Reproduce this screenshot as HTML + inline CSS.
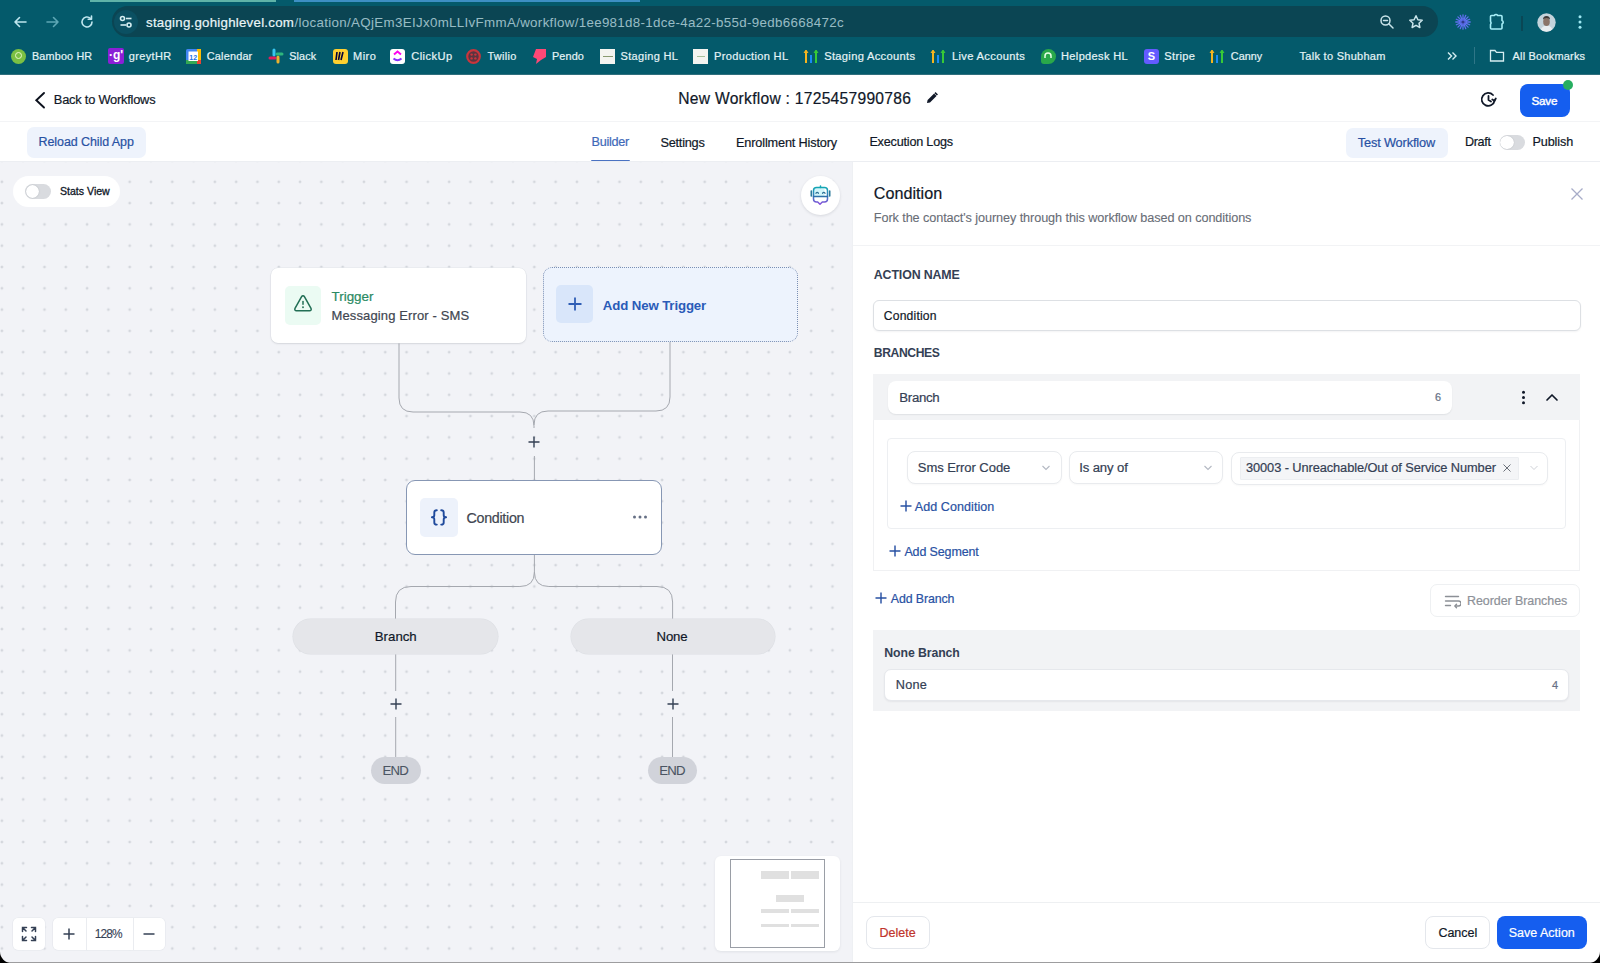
<!DOCTYPE html>
<html><head><meta charset="utf-8"><style>
html,body{margin:0;padding:0;width:1600px;height:963px;overflow:hidden;background:#fff;position:relative;font-family:"Liberation Sans",sans-serif}
.t{position:absolute;white-space:nowrap;line-height:normal}
svg{display:block}
</style></head><body>
<div style="position:absolute;left:0;top:0;width:1600px;height:75px;background:#045a6b"></div>
<div style="position:absolute;left:0;top:74px;width:1600px;height:1px;background:#2f6f7d"></div>
<div style="position:absolute;left:90px;top:0;width:186px;height:2px;background:#5fb3a8"></div>
<div style="position:absolute;left:294px;top:0;width:346px;height:2px;background:#3d8fc4"></div>
<div style="position:absolute;left:112px;top:6px;width:1326px;height:31px;border-radius:16px;background:#0b4553"></div>
<div style="position:absolute;left:114px;top:10px;width:24px;height:24px;border-radius:12px;background:#0b5062"></div>
<svg style="position:absolute;left:118px;top:14px" width="16" height="16" viewBox="0 0 16 16" fill="none" stroke="#d6eef2" stroke-width="1.6">
<circle cx="4.5" cy="4.5" r="2"/><line x1="8" y1="4.5" x2="13.5" y2="4.5"/><circle cx="11" cy="11" r="2"/><line x1="2.5" y1="11" x2="8" y2="11"/></svg>
<svg style="position:absolute;left:12px;top:14px" width="16" height="16" viewBox="0 0 16 16" fill="none" stroke="#bfe6ee" stroke-width="1.6" stroke-linecap="round" stroke-linejoin="round">
<path d="M14 8H3M7.5 3.5L3 8l4.5 4.5"/></svg>
<svg style="position:absolute;left:45px;top:14px" width="16" height="16" viewBox="0 0 16 16" fill="none" stroke="#5ea7b5" stroke-width="1.6" stroke-linecap="round" stroke-linejoin="round">
<path d="M2 8h11M8.5 3.5L13 8l-4.5 4.5"/></svg>
<svg style="position:absolute;left:79px;top:14px" width="16" height="16" viewBox="0 0 16 16" fill="none" stroke="#bfe6ee" stroke-width="1.6" stroke-linecap="round" stroke-linejoin="round">
<path d="M13 8a5 5 0 1 1-1.6-3.7"/><path d="M12.5 2v3.3H9.2"/></svg>
<div class="t" style="left:146.00px;top:15.04px;font-size:13.27px;letter-spacing:0.250px;color:#eaf6f8;font-weight:400;-webkit-text-stroke:0.2px #eaf6f8;">staging.gohighlevel.com</div>
<div class="t" style="left:294.50px;top:14.98px;font-size:13.34px;letter-spacing:0.327px;color:#98bcc4;font-weight:400;-webkit-text-stroke:0.05px #98bcc4;">/location/AQjEm3EIJx0mLLIvFmmA/workflow/1ee981d8-1dce-4a22-b55d-9edb6668472c</div>
<svg style="position:absolute;left:1379px;top:14px" width="16" height="16" viewBox="0 0 16 16" fill="none" stroke="#c9e4ea" stroke-width="1.5" stroke-linecap="round">
<circle cx="6.5" cy="6.5" r="4.5"/><line x1="4.5" y1="6.5" x2="8.5" y2="6.5"/><line x1="10" y1="10" x2="14" y2="14"/></svg>
<svg style="position:absolute;left:1408px;top:14px" width="16" height="16" viewBox="0 0 16 16" fill="none" stroke="#c9e4ea" stroke-width="1.5" stroke-linejoin="round">
<path d="M8 1.8l1.9 4 4.3.5-3.2 2.9.9 4.3L8 11.3l-3.9 2.2.9-4.3L1.8 6.3l4.3-.5z"/></svg>
<svg style="position:absolute;left:1454px;top:13px" width="18" height="18" viewBox="0 0 18 18" stroke="#6070f0" stroke-width="1.3" stroke-linecap="round">
<path d="M12.00 9.00L16.20 9.00M11.77 10.15L15.65 11.76M11.12 11.12L14.09 14.09M10.15 11.77L11.76 15.65M9.00 12.00L9.00 16.20M7.85 11.77L6.24 15.65M6.88 11.12L3.91 14.09M6.23 10.15L2.35 11.76M6.00 9.00L1.80 9.00M6.23 7.85L2.35 6.24M6.88 6.88L3.91 3.91M7.85 6.23L6.24 2.35M9.00 6.00L9.00 1.80M10.15 6.23L11.76 2.35M11.12 6.88L14.09 3.91M11.77 7.85L15.65 6.24"/><circle cx="9" cy="9" r="2.8" fill="#5c6ce8" stroke="none"/><circle cx="9" cy="9" r="1.6" fill="#2d3a8c" stroke="none"/></svg>
<svg style="position:absolute;left:1488px;top:12px" width="18" height="19" viewBox="0 0 18 19" fill="none" stroke="#a6eef7" stroke-width="1.6" stroke-linejoin="round">
<path d="M3.5 3.5h2.8a2 2 0 0 1 3.4 0h3.3a1 1 0 0 1 1 1v4a1.8 1.8 0 0 1 0 3.4V16a1 1 0 0 1-1 1H3.5a1 1 0 0 1-1-1v-3.5q1.2-1.6 0-3.3V4.5a1 1 0 0 1 1-1z"/></svg>
<div style="position:absolute;left:1521px;top:16px;width:1.5px;height:15px;background:#0a4755"></div>
<svg style="position:absolute;left:1537px;top:13px" width="19" height="19" viewBox="0 0 19 19"><defs><clipPath id="av"><circle cx="9.5" cy="9.5" r="9.2"/></clipPath></defs>
<g clip-path="url(#av)"><rect width="19" height="19" fill="#c3d3db"/><path d="M3 19q1-6 6.5-6.5T16 19z" fill="#e8edf0"/><ellipse cx="9.5" cy="8.8" rx="3.3" ry="4.3" fill="#8a7468"/><path d="M6 6.5q0-3.5 3.5-3.5T13 6.5q-1-1.6-3.5-1.6T6 6.5z" fill="#3f3a38"/></g></svg>
<svg style="position:absolute;left:1574px;top:14px" width="12" height="16" viewBox="0 0 12 16" fill="#9fe9f3">
<circle cx="6" cy="2.8" r="1.5"/><circle cx="6" cy="8" r="1.5"/><circle cx="6" cy="13.2" r="1.5"/></svg>
<div style="position:absolute;left:11px;top:48.5px;width:15px;height:15px;border-radius:50%;background:#7bc043"></div>
<div style="position:absolute;left:15px;top:52px;width:7px;height:7px;border:1.6px solid #e8f7c9;border-radius:50%;box-sizing:border-box"></div>
<div class="t" style="left:32.00px;top:50.33px;font-size:10.78px;letter-spacing:0.188px;color:#e4f3f6;font-weight:400;-webkit-text-stroke:0.2px #e4f3f6;">Bamboo HR</div>
<div style="position:absolute;left:108px;top:48px;width:16px;height:16px;border-radius:2px;background:#8b1fd6"></div>
<div style="position:absolute;left:108px;top:48px;width:16px;height:16px;color:#fff;font:bold 12px/15px 'Liberation Sans';text-align:center">&middot;g'</div>
<div class="t" style="left:128.80px;top:50.15px;font-size:10.98px;letter-spacing:0.367px;color:#e4f3f6;font-weight:400;-webkit-text-stroke:0.2px #e4f3f6;">greytHR</div>
<svg style="position:absolute;left:186px;top:48.5px" width="15" height="15" viewBox="0 0 15 15"><rect x="0" y="0" width="15" height="15" rx="1.5" fill="#4285f4"/><rect x="11" y="0" width="4" height="15" fill="#fbbc04"/><rect x="0" y="11" width="15" height="4" fill="#34a853"/><rect x="11" y="11" width="4" height="4" fill="#ea4335"/><rect x="2.5" y="2.5" width="9.5" height="9.5" fill="#fff"/><text x="7.2" y="10.5" font-family="Liberation Sans" font-size="7" font-weight="bold" fill="#1a73e8" text-anchor="middle">12</text></svg>
<div class="t" style="left:206.80px;top:50.20px;font-size:10.92px;letter-spacing:0.171px;color:#e4f3f6;font-weight:400;-webkit-text-stroke:0.2px #e4f3f6;">Calendar</div>
<svg style="position:absolute;left:268px;top:48px" width="16" height="16" viewBox="0 0 16 16" stroke-width="3" stroke-linecap="round">
<path d="M6 2v5" stroke="#36c5f0"/><path d="M2 10h5" stroke="#e01e5a"/><path d="M10 9v5" stroke="#ecb22e"/><path d="M9 6h5" stroke="#2eb67d"/></svg>
<div class="t" style="left:289.30px;top:50.31px;font-size:10.80px;letter-spacing:0.100px;color:#e4f3f6;font-weight:400;-webkit-text-stroke:0.2px #e4f3f6;">Slack</div>
<div style="position:absolute;left:332.5px;top:48.5px;width:15px;height:15px;border-radius:3px;background:#ffd02f"></div>
<svg style="position:absolute;left:334px;top:50px" width="12" height="12" viewBox="0 0 12 12" stroke="#050038" stroke-width="1.6"><path d="M3 2l-1 8M6 2l-1.5 8M9 2l-2 8"/></svg>
<div class="t" style="left:353.00px;top:50.10px;font-size:11.03px;letter-spacing:0.500px;color:#e4f3f6;font-weight:400;-webkit-text-stroke:0.2px #e4f3f6;">Miro</div>
<div style="position:absolute;left:390px;top:48.5px;width:15px;height:15px;border-radius:3px;background:#fff"></div>
<svg style="position:absolute;left:392px;top:50px" width="11" height="12" viewBox="0 0 11 12" fill="none" stroke-width="2"><path d="M1.5 8.5q4 3.5 8 0" stroke="#8930fd"/><path d="M2 4.5l3.5-3 3.5 3" stroke="#ff02f0"/></svg>
<div class="t" style="left:411.30px;top:50.02px;font-size:11.12px;letter-spacing:0.417px;color:#e4f3f6;font-weight:400;-webkit-text-stroke:0.2px #e4f3f6;">ClickUp</div>
<svg style="position:absolute;left:466px;top:48.5px" width="15" height="15" viewBox="0 0 15 15"><circle cx="7.5" cy="7.5" r="6.3" fill="#5a3440" stroke="#c8353c" stroke-width="2.2"/><g fill="#c8353c"><circle cx="5.6" cy="5.6" r="1.2"/><circle cx="9.4" cy="5.6" r="1.2"/><circle cx="5.6" cy="9.4" r="1.2"/><circle cx="9.4" cy="9.4" r="1.2"/></g></svg>
<div class="t" style="left:487.50px;top:50.19px;font-size:10.93px;letter-spacing:0.300px;color:#e4f3f6;font-weight:400;-webkit-text-stroke:0.2px #e4f3f6;">Twilio</div>
<svg style="position:absolute;left:532px;top:48px" width="15" height="16" viewBox="0 0 15 16"><path d="M4 1h10v8l-5 3-5 4 1-5-4-2z" fill="#ff4876"/></svg>
<div class="t" style="left:552.00px;top:50.26px;font-size:10.86px;letter-spacing:0.125px;color:#e4f3f6;font-weight:400;-webkit-text-stroke:0.2px #e4f3f6;">Pendo</div>
<div style="position:absolute;left:600px;top:48.5px;width:15px;height:15px;background:#f4f4f0"></div>
<div style="position:absolute;left:602.5px;top:55.5px;width:10px;height:1.5px;background:#8a9a70"></div>
<div class="t" style="left:620.50px;top:50.14px;font-size:10.99px;letter-spacing:0.333px;color:#e4f3f6;font-weight:400;-webkit-text-stroke:0.2px #e4f3f6;">Staging HL</div>
<div style="position:absolute;left:693px;top:48.5px;width:15px;height:15px;background:#f4f4f0"></div>
<div style="position:absolute;left:696.5px;top:55.5px;width:8px;height:1px;background:#a6c09a"></div>
<div class="t" style="left:714.00px;top:50.07px;font-size:11.07px;letter-spacing:0.333px;color:#e4f3f6;font-weight:400;-webkit-text-stroke:0.2px #e4f3f6;">Production HL</div>
<svg style="position:absolute;left:803px;top:47px" width="16" height="17" viewBox="0 0 16 17" stroke-width="2"><path d="M3 16V4" stroke="#f6b51e"/><path d="M8 16V8" stroke="#188bf6"/><path d="M13 16V4" stroke="#37ca37"/><path d="M1 6l2-3 2 3" fill="#f6b51e" stroke="#f6b51e" stroke-width="1"/><path d="M11 6l2-3 2 3" fill="#37ca37" stroke="#37ca37" stroke-width="1"/></svg>
<div class="t" style="left:824.20px;top:49.99px;font-size:11.16px;letter-spacing:0.307px;color:#e4f3f6;font-weight:400;-webkit-text-stroke:0.2px #e4f3f6;">Staging Accounts</div>
<svg style="position:absolute;left:930px;top:47px" width="16" height="17" viewBox="0 0 16 17" stroke-width="2"><path d="M3 16V4" stroke="#f6b51e"/><path d="M8 16V8" stroke="#188bf6"/><path d="M13 16V4" stroke="#37ca37"/><path d="M1 6l2-3 2 3" fill="#f6b51e" stroke="#f6b51e" stroke-width="1"/><path d="M11 6l2-3 2 3" fill="#37ca37" stroke="#37ca37" stroke-width="1"/></svg>
<div class="t" style="left:952.00px;top:49.99px;font-size:11.15px;letter-spacing:0.333px;color:#e4f3f6;font-weight:400;-webkit-text-stroke:0.2px #e4f3f6;">Live Accounts</div>
<div style="position:absolute;left:1040.5px;top:48.5px;width:15px;height:15px;border-radius:50% 50% 50% 20%;background:#2aa84a"></div>
<svg style="position:absolute;left:1043px;top:51px" width="10" height="10" viewBox="0 0 10 10" fill="none" stroke="#e8ffe8" stroke-width="1.5"><path d="M2 7V5a3 3 0 0 1 6 0v2"/></svg>
<div class="t" style="left:1061.00px;top:50.09px;font-size:11.05px;letter-spacing:0.350px;color:#e4f3f6;font-weight:400;-webkit-text-stroke:0.2px #e4f3f6;">Helpdesk HL</div>
<div style="position:absolute;left:1144px;top:48.5px;width:15px;height:15px;border-radius:3px;background:#635bff;color:#fff;font:bold 11px/15px 'Liberation Sans';text-align:center">S</div>
<div class="t" style="left:1164.30px;top:50.03px;font-size:11.11px;letter-spacing:0.340px;color:#e4f3f6;font-weight:400;-webkit-text-stroke:0.2px #e4f3f6;">Stripe</div>
<svg style="position:absolute;left:1209px;top:47px" width="16" height="17" viewBox="0 0 16 17" stroke-width="2"><path d="M3 16V4" stroke="#f6b51e"/><path d="M8 16V8" stroke="#188bf6"/><path d="M13 16V4" stroke="#37ca37"/><path d="M1 6l2-3 2 3" fill="#f6b51e" stroke="#f6b51e" stroke-width="1"/><path d="M11 6l2-3 2 3" fill="#37ca37" stroke="#37ca37" stroke-width="1"/></svg>
<div class="t" style="left:1230.80px;top:50.31px;font-size:10.80px;letter-spacing:0.050px;color:#e4f3f6;font-weight:400;-webkit-text-stroke:0.2px #e4f3f6;">Canny</div>
<div class="t" style="left:1299.50px;top:50.13px;font-size:11.00px;letter-spacing:0.286px;color:#e4f3f6;font-weight:400;-webkit-text-stroke:0.2px #e4f3f6;">Talk to Shubham</div>
<svg style="position:absolute;left:1446px;top:51px" width="12" height="10" viewBox="0 0 12 10" fill="none" stroke="#d6eef2" stroke-width="1.4"><path d="M2 1.5l3.5 3.5L2 8.5M6.5 1.5L10 5l-3.5 3.5"/></svg>
<div style="position:absolute;left:1474px;top:47px;width:1px;height:17px;background:#2f7687"></div>
<svg style="position:absolute;left:1489px;top:48px" width="16" height="15" viewBox="0 0 16 15" fill="none" stroke="#d6eef2" stroke-width="1.3"><path d="M1.5 2.5h4.5l1.5 1.8h7v8.7h-13z"/></svg>
<div class="t" style="left:1512.50px;top:50.14px;font-size:10.98px;letter-spacing:0.208px;color:#e4f3f6;font-weight:400;-webkit-text-stroke:0.2px #e4f3f6;">All Bookmarks</div>
<div style="position:absolute;left:0;top:75px;width:1600px;height:86px;background:#fff"></div>
<div style="position:absolute;left:0;top:121px;width:1600px;height:1px;background:#f3f4f6"></div>
<svg style="position:absolute;left:34px;top:90.5px" width="14" height="19" viewBox="0 0 14 19" fill="none" stroke="#0c111d" stroke-width="1.9" stroke-linecap="round" stroke-linejoin="miter"><path d="M10 2L2.3 9.2L10 16.5"/></svg>
<div class="t" style="left:53.80px;top:92.43px;font-size:12.85px;letter-spacing:-0.225px;color:#101828;font-weight:400;-webkit-text-stroke:0.2px #101828;">Back to Workflows</div>
<div class="t" style="left:678.30px;top:89.89px;font-size:15.61px;letter-spacing:0.270px;color:#101828;font-weight:400;-webkit-text-stroke:0.2px #101828;">New Workflow : 1725457990786</div>
<svg style="position:absolute;left:925px;top:91px" width="14" height="14" viewBox="0 0 14 14"><path d="M2 12l.6-3 6.5-6.5 2.4 2.4L5 11.4z" fill="#101828"/><path d="M10 1.6l2.4 2.4" stroke="#101828" stroke-width="1.6"/></svg>
<svg style="position:absolute;left:1480px;top:91px" width="18" height="17" viewBox="0 0 18 17" fill="none" stroke="#101828" stroke-width="1.8" stroke-linecap="round" stroke-linejoin="round"><path d="M14.6 9.5A6.5 6.5 0 1 1 13 4"/><path d="M8.5 5v4l2.5 1.5"/><path d="M15.8 7.5l-1.3 2.3-2.2-1.3"/></svg>
<div style="position:absolute;left:1519.5px;top:83.5px;width:50.5px;height:33px;border-radius:8px;background:#155eef"></div>
<div class="t" style="left:1531.60px;top:94.48px;font-size:11.70px;letter-spacing:-0.267px;color:#ffffff;font-weight:400;-webkit-text-stroke:0.4px #ffffff;">Save</div>
<div style="position:absolute;left:1563px;top:80px;width:10px;height:10px;border-radius:50%;background:#27ae60"></div>
<div style="position:absolute;left:27px;top:127px;width:118.5px;height:30.5px;border-radius:7px;background:#eef3fc"></div>
<div class="t" style="left:38.50px;top:134.78px;font-size:12.47px;letter-spacing:-0.067px;color:#2851a3;font-weight:400;-webkit-text-stroke:0.2px #2851a3;">Reload Child App</div>
<div class="t" style="left:591.60px;top:134.62px;font-size:12.64px;letter-spacing:-0.267px;color:#3f69b8;font-weight:400;-webkit-text-stroke:0.2px #3f69b8;">Builder</div>
<div style="position:absolute;left:591px;top:159.5px;width:39px;height:2.5px;background:#4a72c2;border-radius:1px"></div>
<div class="t" style="left:660.40px;top:134.51px;font-size:12.76px;letter-spacing:-0.229px;color:#101828;font-weight:400;-webkit-text-stroke:0.2px #101828;">Settings</div>
<div class="t" style="left:736.00px;top:134.54px;font-size:12.73px;letter-spacing:-0.159px;color:#101828;font-weight:400;-webkit-text-stroke:0.2px #101828;">Enrollment History</div>
<div class="t" style="left:869.40px;top:134.62px;font-size:12.64px;letter-spacing:-0.200px;color:#101828;font-weight:400;-webkit-text-stroke:0.2px #101828;">Execution Logs</div>
<div style="position:absolute;left:1346px;top:127.5px;width:102px;height:30px;border-radius:7px;background:#eef3fc"></div>
<div class="t" style="left:1357.80px;top:134.51px;font-size:12.76px;letter-spacing:-0.150px;color:#2851a3;font-weight:400;-webkit-text-stroke:0.2px #2851a3;">Test Workflow</div>
<div class="t" style="left:1465.00px;top:134.66px;font-size:12.60px;letter-spacing:-0.350px;color:#101828;font-weight:400;-webkit-text-stroke:0.2px #101828;">Draft</div>
<div style="position:absolute;left:1499.5px;top:135px;width:25.5px;height:14.5px;border-radius:8px;background:#d9dbdf"></div>
<div style="position:absolute;left:1500px;top:135.5px;width:13.5px;height:13.5px;border-radius:50%;background:#fff;box-shadow:0 0 1px #9aa0a8"></div>
<div class="t" style="left:1532.50px;top:134.65px;font-size:12.61px;letter-spacing:-0.117px;color:#101828;font-weight:400;-webkit-text-stroke:0.2px #101828;">Publish</div>
<div style="position:absolute;left:0;top:161px;width:853px;height:802px;background-color:#f2f3f7;background-image:radial-gradient(circle,#d4d7dd 0,#d4d7dd 0.9px,rgba(212,215,221,0.5) 1.3px,transparent 1.8px);background-size:21.3px 21.3px;background-position:-8.75px -11.15px"></div>
<div style="position:absolute;left:0;top:161px;width:1600px;height:1px;background:#eceef2"></div>
<div style="position:absolute;left:13px;top:176px;width:107px;height:30.5px;border-radius:16px;background:#fff"></div>
<div style="position:absolute;left:25px;top:184px;width:26px;height:14.5px;border-radius:8px;background:#d9dbdf"></div>
<div style="position:absolute;left:25.5px;top:184.5px;width:13.5px;height:13.5px;border-radius:50%;background:#fff;box-shadow:0 0 1.2px #9aa0a8"></div>
<div class="t" style="left:60.00px;top:184.50px;font-size:10.60px;letter-spacing:-0.011px;color:#101828;font-weight:400;-webkit-text-stroke:0.3px #101828;">Stats View</div>
<div style="position:absolute;left:801px;top:176px;width:39px;height:39px;border-radius:50%;background:#fff;box-shadow:0 1px 3px rgba(16,24,40,.12)"></div>
<svg style="position:absolute;left:808px;top:183px" width="25" height="23" viewBox="0 0 25 23" fill="none" stroke-width="1.5" stroke-linecap="round" stroke-linejoin="round">
<defs><linearGradient id="rg" x1="0" y1="0" x2="0" y2="1"><stop offset="0" stop-color="#14a6b4"/><stop offset="0.55" stop-color="#3c78c0"/><stop offset="1" stop-color="#8a4fdc"/></linearGradient></defs>
<path d="M8.5 5h8v8.5h-11v-5.5a3 3 0 0 1 3-3z" fill="#d2f5fa" stroke="none"/>
<path d="M8.5 4.5h8a3 3 0 0 1 3 3V16a3 3 0 0 1-3 3h-2.2l-2.3 2.3-2.3-2.3H8.5a3 3 0 0 1-3-3V7.5a3 3 0 0 1 3-3z" stroke="url(#rg)"/>
<path d="M5.5 13.5h14" stroke="#2e6fa8"/><path d="M12.5 4.5V3" stroke="#14a6b4"/><path d="M3.3 8v5M21.7 8v5" stroke="#2c7a9a" stroke-width="1.6"/>
<path d="M8 10.2q1.2-1.5 2.4 0M14.6 10.2q1.2-1.5 2.4 0" stroke="#2a6f95" stroke-width="1.3"/></svg>
<svg style="position:absolute;left:0;top:0" width="853" height="963" fill="none" stroke="#a5a8af" stroke-width="1">
<path d="M399 343V398q0 14 14 14H520q14 0 14 14V428"/>
<path d="M670 341V397q0 14-14 14H548q-14 0-14 14"/>
<path d="M534.4 456V480.5"/>
<path d="M534.4 554V572q0 14.5-14.5 14.5H411q-15.5 0-15.5 15.5V619"/>
<path d="M534.4 572q0 14.5 14.5 14.5H657q15.6 0 15.6 15.5V619"/>
<path d="M395.7 654V691M395.7 717V757"/>
<path d="M672.5 654V691M672.5 717V757"/>
</svg>
<svg style="position:absolute;left:527.4px;top:435px" width="14" height="14" viewBox="0 0 14 14" stroke="#344054" stroke-width="1.4"><path d="M7 1.5v11M1.5 7h11"/></svg>
<svg style="position:absolute;left:388.7px;top:697px" width="14" height="14" viewBox="0 0 14 14" stroke="#344054" stroke-width="1.4"><path d="M7 1.5v11M1.5 7h11"/></svg>
<svg style="position:absolute;left:665.5px;top:697px" width="14" height="14" viewBox="0 0 14 14" stroke="#344054" stroke-width="1.4"><path d="M7 1.5v11M1.5 7h11"/></svg>
<div style="position:absolute;left:271px;top:267.6px;width:255px;height:75px;border-radius:7px;background:#fff;box-shadow:0 1px 2px rgba(16,24,40,.10),0 0 0 0.6px #e4e7ec"></div>
<div style="position:absolute;left:285px;top:286px;width:36px;height:39px;border-radius:5px;background:#ebfbf3"></div>
<svg style="position:absolute;left:293px;top:294px" width="20" height="20" viewBox="0 0 20 20" fill="none" stroke="#226f55" stroke-width="1.5" stroke-linecap="round" stroke-linejoin="round">
<path d="M8.6 2.6a1.6 1.6 0 0 1 2.8 0l6.6 11.8a1.6 1.6 0 0 1-1.4 2.4H3.4a1.6 1.6 0 0 1-1.4-2.4z"/><path d="M10 7.6v2.6"/><path d="M10 13.1v.2" stroke-width="1.8"/></svg>
<div class="t" style="left:331.50px;top:288.91px;font-size:13.41px;letter-spacing:0.000px;color:#2a8a63;font-weight:400;-webkit-text-stroke:0.2px #2a8a63;">Trigger</div>
<div class="t" style="left:331.50px;top:308.28px;font-size:13.01px;letter-spacing:0.125px;color:#414651;font-weight:400;-webkit-text-stroke:0.2px #414651;">Messaging Error - SMS</div>
<div style="position:absolute;left:542.5px;top:267px;width:255px;height:74.5px;border-radius:9px;background:#edf3fd;border:1px dotted #7b8fb3;box-sizing:border-box"></div>
<div style="position:absolute;left:556.3px;top:285px;width:37px;height:38.4px;border-radius:5px;background:#d9e6fa"></div>
<svg style="position:absolute;left:566px;top:295px" width="18" height="18" viewBox="0 0 18 18" stroke="#2f5eb5" stroke-width="1.8"><path d="M9 2.5v13M2.5 9h13"/></svg>
<div class="t" style="left:602.80px;top:298.06px;font-size:13.25px;letter-spacing:-0.129px;color:#2a5bb8;font-weight:700;">Add New Trigger</div>
<div style="position:absolute;left:406.3px;top:480.2px;width:255.5px;height:74.4px;border-radius:9px;background:#fff;border:1px solid #8797b4;box-sizing:border-box"></div>
<div style="position:absolute;left:420px;top:498px;width:38px;height:38.7px;border-radius:5px;background:#edf2fb"></div>
<svg style="position:absolute;left:430px;top:509px" width="18" height="17" viewBox="0 0 18 17" fill="none" stroke="#1f4a9c" stroke-width="1.9" stroke-linecap="round" stroke-linejoin="round"><path d="M6.8 1.2Q4.3 1.2 4.3 3.4V6.2Q4.3 8.3 1.9 8.3Q4.3 8.3 4.3 10.4V13.4Q4.3 15.6 6.8 15.6M11.2 1.2Q13.7 1.2 13.7 3.4V6.2Q13.7 8.3 16.1 8.3Q13.7 8.3 13.7 10.4V13.4Q13.7 15.6 11.2 15.6"/></svg>
<div class="t" style="left:466.50px;top:510.13px;font-size:14.26px;letter-spacing:-0.275px;color:#414651;font-weight:400;-webkit-text-stroke:0.2px #414651;">Condition</div>
<svg style="position:absolute;left:632px;top:514px" width="16" height="6" viewBox="0 0 16 6" fill="#667085"><circle cx="2.5" cy="3" r="1.5"/><circle cx="8" cy="3" r="1.5"/><circle cx="13.5" cy="3" r="1.5"/></svg>
<div style="position:absolute;left:293px;top:619px;width:205px;height:35px;border-radius:18px;background:#e5e6ea;box-shadow:0 0 0 0.5px #dcdee3"></div>
<div class="t" style="left:374.80px;top:629.07px;font-size:13.24px;letter-spacing:0.000px;color:#101828;font-weight:400;-webkit-text-stroke:0.2px #101828;">Branch</div>
<div style="position:absolute;left:570.5px;top:619px;width:204px;height:35px;border-radius:18px;background:#e5e6ea;box-shadow:0 0 0 0.5px #dcdee3"></div>
<div class="t" style="left:656.60px;top:629.12px;font-size:13.18px;letter-spacing:-0.200px;color:#101828;font-weight:400;-webkit-text-stroke:0.2px #101828;">None</div>
<div style="position:absolute;left:371px;top:757px;width:49.5px;height:26.5px;border-radius:14px;background:#d1d3da"></div>
<div class="t" style="left:382.50px;top:763.10px;font-size:13.21px;letter-spacing:-0.850px;color:#4b5563;font-weight:400;-webkit-text-stroke:0.1px #4b5563;">END</div>
<div style="position:absolute;left:647.8px;top:757px;width:49.5px;height:26.5px;border-radius:14px;background:#d1d3da"></div>
<div class="t" style="left:659.30px;top:763.10px;font-size:13.21px;letter-spacing:-0.850px;color:#4b5563;font-weight:400;-webkit-text-stroke:0.1px #4b5563;">END</div>
<div style="position:absolute;left:13px;top:918px;width:32px;height:32px;border-radius:5px;background:#fff;box-shadow:0 0 0 0.6px #e4e7ec"></div>
<svg style="position:absolute;left:20px;top:925px" width="18" height="18" viewBox="0 0 18 18" fill="none" stroke="#344054" stroke-width="1.5" stroke-linecap="round">
<path d="M2.5 6.5v-4h4M2.5 2.5l3.5 3.5M15.5 6.5v-4h-4M15.5 2.5L12 6M2.5 11.5v4h4M2.5 15.5L6 12M15.5 11.5v4h-4M15.5 15.5L12 12"/></svg>
<div style="position:absolute;left:53px;top:918px;width:112px;height:32px;border-radius:5px;background:#fff;box-shadow:0 0 0 0.6px #e4e7ec"></div>
<div style="position:absolute;left:85.5px;top:918px;width:1px;height:32px;background:#eaecf0"></div>
<div style="position:absolute;left:132.5px;top:918px;width:1px;height:32px;background:#eaecf0"></div>
<svg style="position:absolute;left:62px;top:927px" width="14" height="14" viewBox="0 0 14 14" stroke="#344054" stroke-width="1.5"><path d="M7 1.5v11M1.5 7h11"/></svg>
<div class="t" style="left:94.80px;top:927.28px;font-size:11.92px;letter-spacing:-0.900px;color:#344054;font-weight:400;-webkit-text-stroke:0.1px #344054;">128%</div>
<svg style="position:absolute;left:142px;top:927px" width="14" height="14" viewBox="0 0 14 14" stroke="#344054" stroke-width="1.5"><path d="M1.5 7h11"/></svg>
<div style="position:absolute;left:715.3px;top:856px;width:125px;height:94.5px;border-radius:6px;background:#fff;box-shadow:0 1px 3px rgba(16,24,40,.08)"></div>
<div style="position:absolute;left:730.3px;top:858.5px;width:95px;height:89px;border:1.5px solid #9a9ea6;box-sizing:border-box"></div>
<div style="position:absolute;left:760.7px;top:870.6px;width:28px;height:8px;background:#e0e0e0"></div>
<div style="position:absolute;left:790.7px;top:870.6px;width:28px;height:8px;background:#e0e0e0"></div>
<div style="position:absolute;left:775.7px;top:894.7px;width:28px;height:7.3px;background:#e0e0e0"></div>
<div style="position:absolute;left:760.7px;top:909.2px;width:28px;height:3.6px;background:#e0e0e0"></div>
<div style="position:absolute;left:790.7px;top:909.2px;width:28px;height:3.6px;background:#e0e0e0"></div>
<div style="position:absolute;left:760.7px;top:924.3px;width:28px;height:3.2px;background:#e0e0e0"></div>
<div style="position:absolute;left:790.7px;top:924.3px;width:28px;height:3.2px;background:#e0e0e0"></div>
<div style="position:absolute;left:852.5px;top:162px;width:747.5px;height:801px;background:#fff;box-shadow:-1px 0 0 #eef0f3"></div>
<div class="t" style="left:873.80px;top:184.39px;font-size:16.15px;letter-spacing:0.025px;color:#101828;font-weight:400;-webkit-text-stroke:0.2px #101828;">Condition</div>
<div class="t" style="left:873.80px;top:210.59px;font-size:12.68px;letter-spacing:-0.087px;color:#686d76;font-weight:400;-webkit-text-stroke:0.1px #686d76;">Fork the contact's journey through this workflow based on conditions</div>
<svg style="position:absolute;left:1570px;top:187px" width="14" height="14" viewBox="0 0 14 14" stroke="#a7acc8" stroke-width="1.3"><path d="M1.5 1.5l11 11M12.5 1.5l-11 11"/></svg>
<div style="position:absolute;left:853px;top:245px;width:747px;height:1px;background:#f2f3f5"></div>
<div class="t" style="left:873.80px;top:267.85px;font-size:12.39px;letter-spacing:-0.130px;color:#344054;font-weight:700;">ACTION NAME</div>
<div style="position:absolute;left:873px;top:299.5px;width:707.5px;height:31px;border-radius:6px;background:#fff;border:1px solid #dde0e4;box-sizing:border-box;box-shadow:0 1px 2px rgba(16,24,40,.05)"></div>
<div class="t" style="left:883.80px;top:309.11px;font-size:12.11px;letter-spacing:0.188px;color:#101828;font-weight:400;-webkit-text-stroke:0.2px #101828;">Condition</div>
<div class="t" style="left:873.80px;top:346.06px;font-size:12.16px;letter-spacing:-0.400px;color:#344054;font-weight:700;">BRANCHES</div>
<div style="position:absolute;left:872.7px;top:374px;width:707.3px;height:196.5px;background:#fff;border:1px solid #f0f1f3;box-sizing:border-box"></div>
<div style="position:absolute;left:872.7px;top:374px;width:707.3px;height:45.7px;background:#f2f3f5"></div>
<div style="position:absolute;left:887.8px;top:381px;width:564.5px;height:32.5px;border-radius:8px;background:#fff;box-shadow:0 1px 1.5px rgba(16,24,40,.08)"></div>
<div class="t" style="left:899.30px;top:390.09px;font-size:13.22px;letter-spacing:-0.300px;color:#344054;font-weight:400;-webkit-text-stroke:0.2px #344054;">Branch</div>
<div class="t" style="left:1435.00px;top:391.24px;font-size:10.88px;letter-spacing:0.000px;color:#667085;font-weight:400;-webkit-text-stroke:0.2px #667085;">6</div>
<svg style="position:absolute;left:1519px;top:390px" width="9" height="15" viewBox="0 0 9 15" fill="#101828"><circle cx="4.5" cy="2.2" r="1.5"/><circle cx="4.5" cy="7.5" r="1.5"/><circle cx="4.5" cy="12.8" r="1.5"/></svg>
<svg style="position:absolute;left:1545px;top:391px" width="14" height="12" viewBox="0 0 14 12" fill="none" stroke="#101828" stroke-width="1.7" stroke-linecap="round" stroke-linejoin="round"><path d="M2 9l5-5 5 5"/></svg>
<div style="position:absolute;left:887.3px;top:437.5px;width:679px;height:91.5px;border-radius:4px;background:#fff;border:1px solid #edeff2;box-sizing:border-box"></div>
<div style="position:absolute;left:907.4px;top:451.4px;width:154.30000000000007px;height:33.10000000000002px;border-radius:8px;background:#fff;border:1px solid #e9ebee;box-sizing:border-box;box-shadow:0 1px 2px rgba(16,24,40,.03)"></div>
<div class="t" style="left:917.80px;top:460.26px;font-size:13.04px;letter-spacing:-0.069px;color:#344054;font-weight:400;-webkit-text-stroke:0.2px #344054;">Sms Error Code</div>
<svg style="position:absolute;left:1040px;top:463px" width="12" height="10" viewBox="0 0 12 10" fill="none" stroke="#b3b8c2" stroke-width="1.1"><path d="M2.5 3l3.5 3.5L9.5 3"/></svg>
<div style="position:absolute;left:1069.3px;top:451.4px;width:153.29999999999995px;height:33.10000000000002px;border-radius:8px;background:#fff;border:1px solid #e9ebee;box-sizing:border-box;box-shadow:0 1px 2px rgba(16,24,40,.03)"></div>
<div class="t" style="left:1079.20px;top:460.19px;font-size:13.11px;letter-spacing:-0.113px;color:#344054;font-weight:400;-webkit-text-stroke:0.2px #344054;">Is any of</div>
<svg style="position:absolute;left:1202px;top:463px" width="12" height="10" viewBox="0 0 12 10" fill="none" stroke="#b3b8c2" stroke-width="1.1"><path d="M2.5 3l3.5 3.5L9.5 3"/></svg>
<div style="position:absolute;left:1230.7px;top:452px;width:317.79999999999995px;height:32.5px;border-radius:8px;background:#fff;border:1px solid #e9ebee;box-sizing:border-box;box-shadow:0 1px 2px rgba(16,24,40,.03)"></div>
<div style="position:absolute;left:1240.2px;top:456.7px;width:278.6px;height:23px;border-radius:1px;background:#f4f5f7;border:1px solid #eceef1;box-sizing:border-box"></div>
<div class="t" style="left:1246.00px;top:460.46px;font-size:12.82px;letter-spacing:-0.090px;color:#344054;font-weight:400;-webkit-text-stroke:0.2px #344054;">30003 - Unreachable/Out of Service Number</div>
<svg style="position:absolute;left:1501px;top:462px" width="12" height="12" viewBox="0 0 12 12" stroke="#6b7079" stroke-width="1"><path d="M2.5 2.5l7 7M9.5 2.5l-7 7"/></svg>
<svg style="position:absolute;left:1528px;top:463px" width="12" height="10" viewBox="0 0 12 10" fill="none" stroke="#cfd2d8" stroke-width="1"><path d="M2.5 3l3.5 3.5L9.5 3"/></svg>
<svg style="position:absolute;left:899.8px;top:499.8px" width="12" height="12" viewBox="0 0 12 12" stroke="#2851a3" stroke-width="1.45"><path d="M6 0.5v11M0.5 6h11"/></svg>
<div class="t" style="left:914.80px;top:499.72px;font-size:12.53px;letter-spacing:0.075px;color:#2851a3;font-weight:400;-webkit-text-stroke:0.2px #2851a3;">Add Condition</div>
<svg style="position:absolute;left:889.3px;top:544.8px" width="12" height="12" viewBox="0 0 12 12" stroke="#2851a3" stroke-width="1.45"><path d="M6 0.5v11M0.5 6h11"/></svg>
<div class="t" style="left:904.40px;top:544.76px;font-size:12.49px;letter-spacing:-0.130px;color:#2851a3;font-weight:400;-webkit-text-stroke:0.2px #2851a3;">Add Segment</div>
<svg style="position:absolute;left:875.2px;top:592.2px" width="12" height="12" viewBox="0 0 12 12" stroke="#2851a3" stroke-width="1.45"><path d="M6 0.5v11M0.5 6h11"/></svg>
<div class="t" style="left:890.80px;top:591.87px;font-size:12.37px;letter-spacing:-0.111px;color:#2851a3;font-weight:400;-webkit-text-stroke:0.2px #2851a3;">Add Branch</div>
<div style="position:absolute;left:1430.2px;top:584.4px;width:149.7px;height:32.6px;border-radius:7px;background:#fff;border:1px solid #eef0f2;box-sizing:border-box"></div>
<svg style="position:absolute;left:1443.5px;top:594px" width="17" height="15" viewBox="0 0 17 15" fill="none" stroke="#8c9096" stroke-width="1.4" stroke-linecap="round"><path d="M1.5 2.5h13M1.5 7h13q2.5 0 2.5 2.5t-2.5 2.5h-3M1.5 11.5h5"/><path d="M12.5 10.2l-1.6 1.8 1.6 1.8"/></svg>
<div class="t" style="left:1467.00px;top:593.80px;font-size:12.44px;letter-spacing:-0.047px;color:#8d9198;font-weight:400;-webkit-text-stroke:0.2px #8d9198;">Reorder Branches</div>
<div style="position:absolute;left:872.7px;top:630.1px;width:707.3px;height:81.4px;background:#f2f3f5"></div>
<div class="t" style="left:884.30px;top:645.95px;font-size:12.29px;letter-spacing:-0.090px;color:#344054;font-weight:700;">None Branch</div>
<div style="position:absolute;left:883.8px;top:669px;width:685.4px;height:31.7px;border-radius:7px;background:#fff;border:1px solid #e6e8ec;box-sizing:border-box;box-shadow:0 1px 2px rgba(16,24,40,.06)"></div>
<div class="t" style="left:895.80px;top:677.57px;font-size:12.69px;letter-spacing:0.267px;color:#344054;font-weight:400;-webkit-text-stroke:0.2px #344054;">None</div>
<div class="t" style="left:1552.00px;top:679.15px;font-size:10.98px;letter-spacing:-0.700px;color:#667085;font-weight:400;-webkit-text-stroke:0.2px #667085;">4</div>
<div style="position:absolute;left:853px;top:902px;width:747px;height:1px;background:#eef0f2"></div>
<div style="position:absolute;left:866.4px;top:916.1px;width:63.3px;height:33.3px;border-radius:8px;background:#fff;border:1px solid #e4e7ec;box-sizing:border-box"></div>
<div class="t" style="left:879.50px;top:925.75px;font-size:12.50px;letter-spacing:0.020px;color:#c0342b;font-weight:400;-webkit-text-stroke:0.2px #c0342b;">Delete</div>
<div style="position:absolute;left:1425.2px;top:916.1px;width:64.8px;height:33.3px;border-radius:8px;background:#fff;border:1px solid #e4e7ec;box-sizing:border-box"></div>
<div class="t" style="left:1438.40px;top:925.75px;font-size:12.50px;letter-spacing:-0.020px;color:#101828;font-weight:400;-webkit-text-stroke:0.2px #101828;">Cancel</div>
<div style="position:absolute;left:1497px;top:916.1px;width:90px;height:33.3px;border-radius:8px;background:#155eef"></div>
<div class="t" style="left:1508.70px;top:925.74px;font-size:12.51px;letter-spacing:0.010px;color:#ffffff;font-weight:400;-webkit-text-stroke:0.2px #ffffff;">Save Action</div>
<div style="position:absolute;left:0;top:962px;width:1600px;height:1px;background:#9d9d9f"></div>
<svg style="position:absolute;left:0;top:950px" width="1600" height="13" viewBox="0 0 1600 13"><path d="M0 1.5A11.5 11.5 0 0 0 11.5 13H0z" fill="#000"/><path d="M1600 1.5A11.5 11.5 0 0 1 1588.5 13H1600z" fill="#000"/></svg>
</body></html>
